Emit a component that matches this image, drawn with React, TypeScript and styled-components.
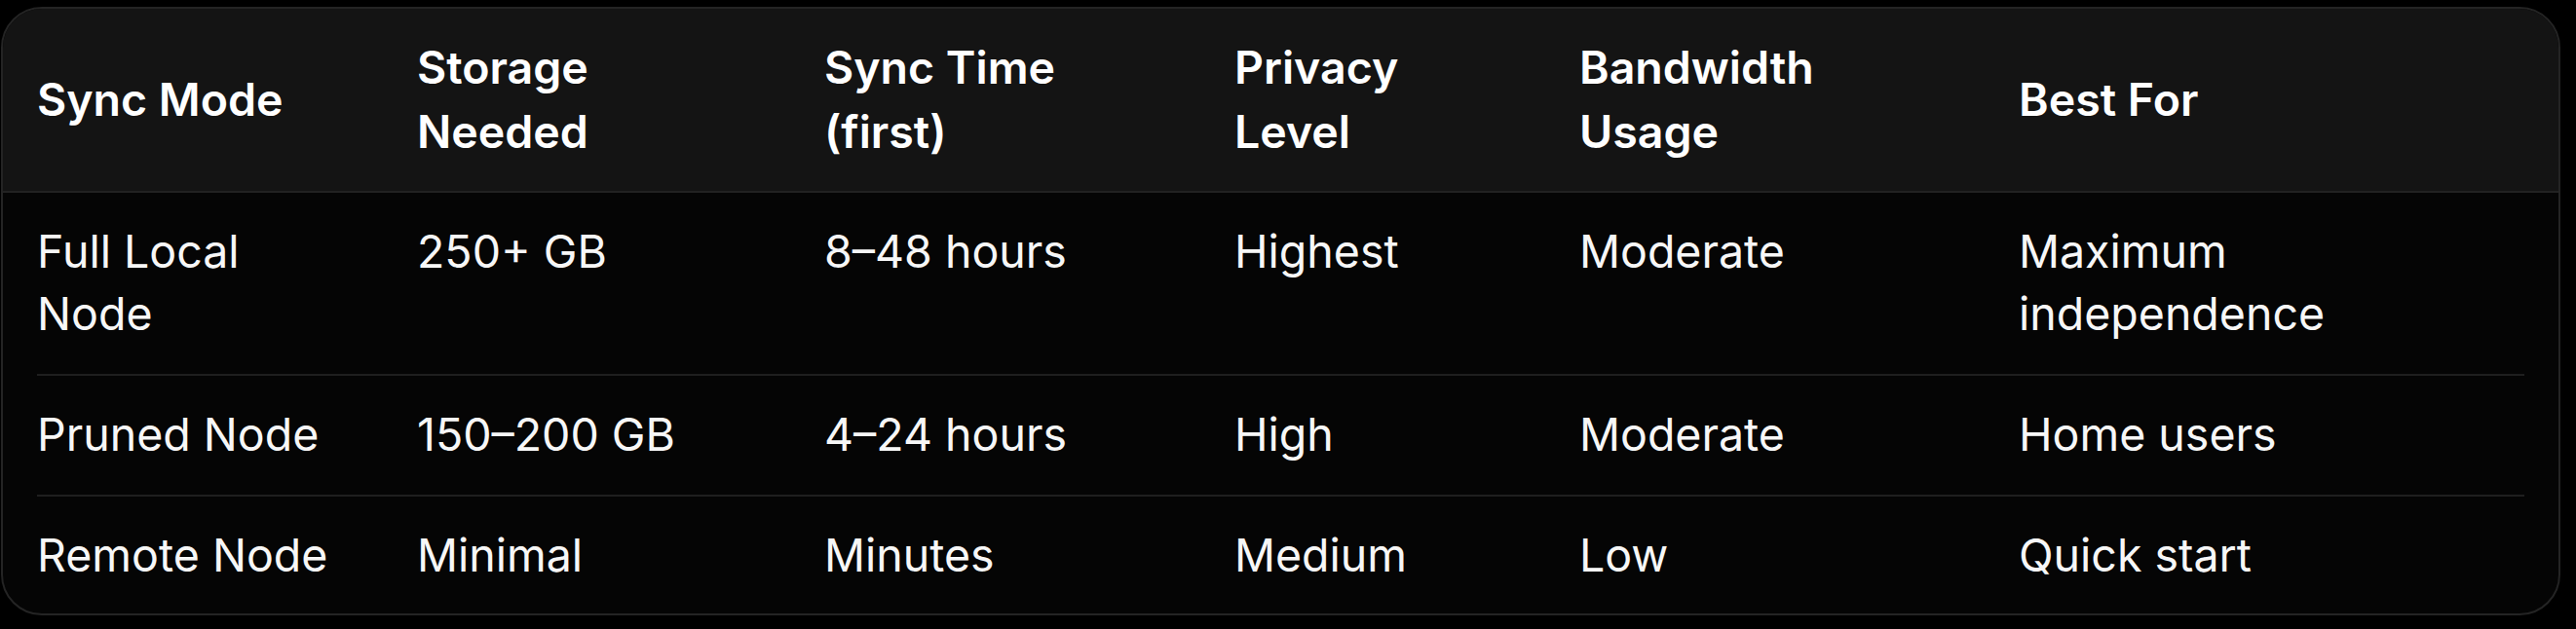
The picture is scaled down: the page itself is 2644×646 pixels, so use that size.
import styled, { createGlobalStyle } from 'styled-components';

const GlobalStyle = createGlobalStyle`
  html, body {
    margin: 0;
    padding: 0;
    background: #000000;
  }
  body {
    font-family: Inter, "Noto Sans", "Liberation Sans", sans-serif;
    -webkit-font-smoothing: antialiased;
  }
`;

const columns = ['Sync Mode', 'Storage Needed', 'Sync Time (first)', 'Privacy Level', 'Bandwidth Usage', 'Best For'];

const rows = [
  ['Full Local Node', '250+ GB', '8–48 hours', 'Highest', 'Moderate', 'Maximum independence'],
  ['Pruned Node', '150–200 GB', '4–24 hours', 'High', 'Moderate', 'Home users'],
  ['Remote Node', 'Minimal', 'Minutes', 'Medium', 'Low', 'Quick start'],
];

// header labels break into two lines in the reference
const headerLines: Record<string, string[]> = {
  'Storage Needed': ['Storage', 'Needed'],
  'Sync Time (first)': ['Sync Time', '(first)'],
  'Privacy Level': ['Privacy', 'Level'],
  'Bandwidth Usage': ['Bandwidth', 'Usage'],
};

const App = () => {
  return (
    <>
      <GlobalStyle />
      <TableCard>
        <HeaderRow>
          {columns.map((col) => (
            <HeadCell key={col}>
              {(headerLines[col] ?? [col]).map((line) => (
                <span key={line}>{line}</span>
              ))}
            </HeadCell>
          ))}
        </HeaderRow>
        <Body>
          {rows.map((row, i) => (
            <BodyRow key={row[0]} $last={i === rows.length - 1}>
              {row.map((cell, j) => (
                <Cell key={j}>{cell}</Cell>
              ))}
            </BodyRow>
          ))}
        </Body>
      </TableCard>
    </>
  );
};

export default App;

const gridColumns = '390px 418px 421px 354px 451px 1fr';

const TableCard = styled.div`
  margin: 7px 16px 0 1px;
  height: 625px;
  box-sizing: border-box;
  background: #050505;
  border: 2px solid #242424;
  border-radius: 42px;
  overflow: hidden;
`;

const HeaderRow = styled.div`
  display: grid;
  grid-template-columns: ${gridColumns};
  padding: 27px 35px 28px;
  background: #141414;
  border-bottom: 2px solid #222222;
`;

const HeadCell = styled.div`
  display: flex;
  flex-direction: column;
  justify-content: center;
  color: #ffffff;
  font-size: 46.5px;
  font-weight: 600;
  line-height: 66px;
  white-space: nowrap;
`;

const Body = styled.div`
  padding: 0 35px;
`;

const BodyRow = styled.div<{ $last?: boolean }>`
  display: grid;
  grid-template-columns: ${gridColumns};
  padding: 28px 0 30px;
  border-bottom: ${(props) => (props.$last ? 'none' : '2px solid #1f1f1f')};
`;

const Cell = styled.div`
  color: #f7f7f7;
  font-size: 46.5px;
  font-weight: 400;
  line-height: 64px;
  padding-right: 72px;
`;
